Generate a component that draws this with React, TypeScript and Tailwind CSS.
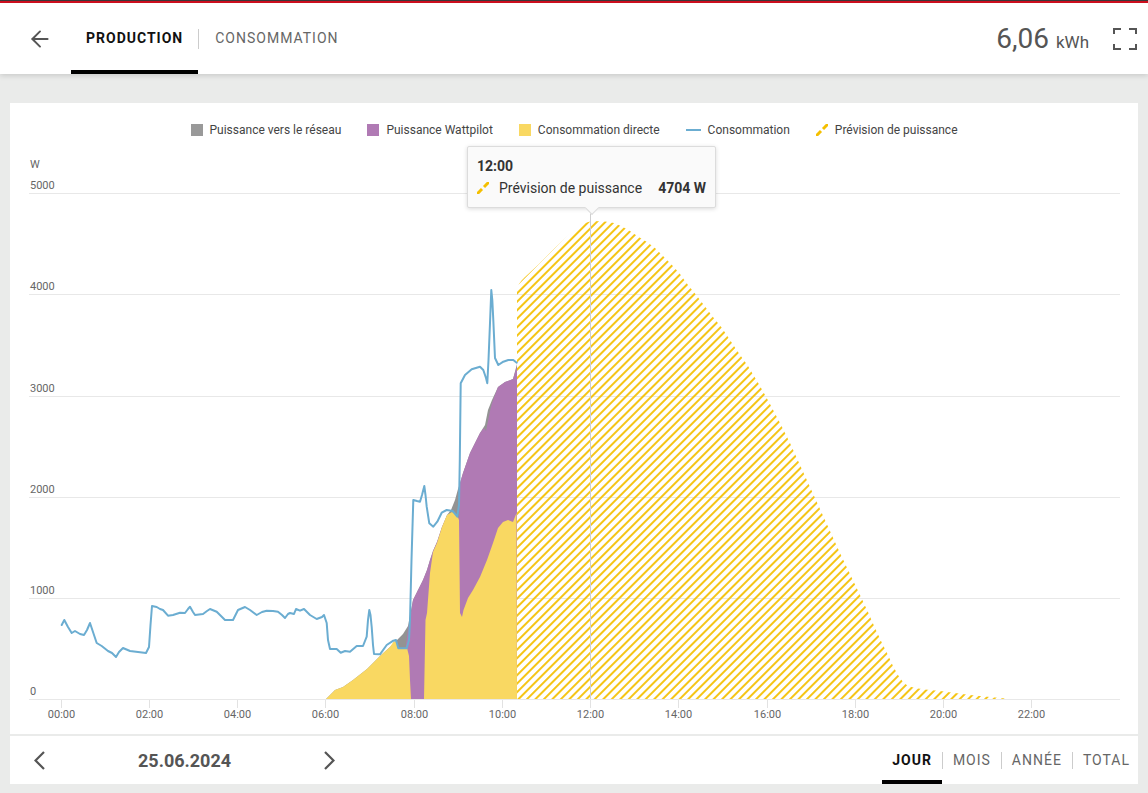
import { ArrowLeft } from 'lucide-react';

type Pt = [number, number];

const toPath = (pts: Pt[], close = false) =>
  pts.map((p, i) => `${i === 0 ? 'M' : 'L'}${p[0]} ${p[1]}`).join(' ') + (close ? ' Z' : '');

const BASE = 699;

const total: Pt[] = [
  [326, BASE], [335, 690], [343, 687], [353, 680], [367, 669], [380, 656], [390, 647], [397, 640],
  [403, 634], [408, 626], [413, 600], [418, 590], [423, 580], [427, 570], [430, 560], [433, 551],
  [437, 542], [442, 527], [447, 515], [451, 510], [455, 500], [458, 489], [460, 483], [463, 473],
  [470, 453], [480, 433], [485, 425], [488, 410], [492, 400], [498, 387], [505, 382], [513, 379],
  [517, 364], [517, BASE],
];

const wattpilot: Pt[] = [
  [405, BASE], [405, 652], [408, 630], [413, 600], [418, 590], [423, 580], [427, 570], [430, 560],
  [433, 551], [437, 542], [442, 527], [447, 516], [452, 513], [457, 515], [459, 518], [460, 483],
  [463, 473], [470, 453], [480, 433], [484, 428], [486, 431], [488, 421], [490, 411], [492, 403],
  [498, 387], [505, 382], [513, 379], [517, 366], [517, BASE],
];

const direct: Pt[] = [
  [326, BASE], [335, 690], [343, 687], [353, 680], [367, 669], [380, 656], [390, 647], [394, 641],
  [397, 643], [398.5, 648], [407, 648], [409, 656], [410, 680], [411, BASE], [424, BASE], [425.5, 620],
  [427, 613], [430, 573], [433, 552], [437, 543], [442, 527], [447, 515], [452, 512], [457, 515],
  [459, 520], [460, 613], [462, 617], [463.5, 610], [468, 598], [473, 590], [480, 577], [487, 560],
  [493, 543], [498, 528], [503, 522], [508, 520], [513, 522], [516.5, 513], [517, BASE],
];

const forecast: Pt[] = [
  [517, BASE], [517, 290], [519, 284], [522, 280], [525, 277], [538, 265], [555, 248], [572, 232],
  [585, 223], [592, 221], [605, 221.5], [614, 223], [622, 226.5], [630, 231], [638, 236.5],
  [647, 242], [655, 248], [663, 256], [672, 265], [680, 274], [688, 285], [697, 296], [705, 306.5],
  [713, 317], [722, 328], [730, 340], [738, 352], [748, 366], [760, 386], [770, 404], [780, 423],
  [790, 443], [800, 465], [810, 487], [820, 509], [830, 531], [840, 553], [850, 574], [860, 595],
  [868, 612], [875, 628], [882, 643], [888, 655], [893, 666], [898, 675], [903, 682], [908, 686],
  [915, 688], [925, 689.5], [940, 691], [955, 693], [970, 695], [985, 696.5], [1000, 698], [1010, BASE],
];

const consumption: Pt[] = [
  [61.7, 625], [64.3, 620], [68, 627], [71.7, 633], [75, 631], [80, 634], [84, 635], [87, 630],
  [90, 623], [93, 632], [96.7, 643], [101.7, 646], [108, 651], [112, 653], [116, 657], [119, 652],
  [123, 648], [130, 651], [138, 652], [146, 653], [149, 647], [150.5, 625], [152, 606], [156.7, 607],
  [160, 609], [163, 610], [168, 615.7], [173, 615], [180, 612.7], [185, 613], [188, 609], [190, 606.7],
  [193, 612], [195, 615], [203, 614], [207, 611], [210, 609], [216.7, 611.7], [222, 617], [225, 620],
  [233, 620], [236, 614], [238, 610], [245, 607], [250, 610], [256.7, 615], [262, 612], [266.7, 610.7],
  [273, 611], [278, 611.7], [282, 615], [285, 618], [288, 614], [290, 613], [294, 614], [296, 609],
  [300, 610.7], [304, 609], [307, 612], [310, 615], [316.7, 619], [322, 617], [324, 615], [326.7, 623],
  [328, 640], [330, 649], [336.7, 649], [340.7, 652.7], [345, 651], [350, 651.7], [356.7, 646],
  [363, 646], [366.7, 636.7], [368, 620], [369.3, 610], [370.5, 615], [371.7, 627], [373, 645],
  [374, 654], [380, 654.3], [386.7, 645], [393.3, 640.7], [396, 640], [398.3, 648.3], [406.7, 648.3],
  [409, 640], [410, 620], [411.5, 560], [413.3, 500], [417, 501], [420, 501.7], [422, 495],
  [424.3, 486], [425.5, 495], [426.7, 506.7], [429.3, 523.3], [433.3, 526.7], [437.3, 521.7],
  [441.7, 512.7], [446.7, 510], [452.7, 511], [457.3, 516.7], [459, 505], [459.8, 460], [460.7, 383.3],
  [465, 375], [471.7, 369.3], [480, 366.7], [483.3, 370], [486, 378], [487.3, 383.3], [488.5, 360],
  [490, 323], [491.3, 290], [492.3, 300], [493.3, 320], [495, 358], [498.3, 365], [503.3, 361.7],
  [508.3, 360], [513.3, 360], [516.7, 362.7],
];

const gridLines = [
  { v: '0', y: 699 },
  { v: '1000', y: 598 },
  { v: '2000', y: 497 },
  { v: '3000', y: 396 },
  { v: '4000', y: 294 },
  { v: '5000', y: 193 },
];

const hours = [0, 2, 4, 6, 8, 10, 12, 14, 16, 18, 20, 22];

function HatchIcon() {
  return (
    <svg width="12" height="12" viewBox="0 0 12 12">
      <line x1="0" y1="12" x2="5" y2="7" stroke="#f4bf00" strokeWidth="3" />
      <line x1="7" y1="5" x2="12" y2="0" stroke="#f4bf00" strokeWidth="3" />
    </svg>
  );
}

function Legend() {
  const items = [
    { label: 'Puissance vers le réseau', icon: <span className="w-[12px] h-[12px] bg-[#999999]" /> },
    { label: 'Puissance Wattpilot', icon: <span className="w-[12px] h-[12px] bg-[#b07ab4]" /> },
    { label: 'Consommation directe', icon: <span className="w-[12px] h-[12px] bg-[#f9d862]" /> },
    { label: 'Consommation', icon: <span className="w-[15px] h-[2px] bg-[#6badd1]" /> },
    { label: 'Prévision de puissance', icon: <HatchIcon /> },
  ];
  return (
    <div className="h-[52px] pt-[18px] flex justify-center gap-[26px] text-[12px] text-[#444]">
      {items.map((it) => (
        <div key={it.label} className="flex items-center gap-[7px] h-[18px]">
          {it.icon}
          <span>{it.label}</span>
        </div>
      ))}
    </div>
  );
}

function Chart() {
  return (
    <svg width="1128" height="579" viewBox="10 155 1128 579" className="block">
      <defs>
        <pattern id="hatch" patternUnits="userSpaceOnUse" width="6" height="6" patternTransform="rotate(45)">
          <line x1="3" y1="0" x2="3" y2="6" stroke="#f5c20a" strokeWidth="1.9" />
        </pattern>
      </defs>

      {gridLines.map((g) => (
        <g key={g.v}>
          <line x1="29" x2="1120" y1={g.y + 0.5} y2={g.y + 0.5} stroke="#e8e8e8" strokeWidth="1" />
          <text x="30" y={g.y - 4} fontSize="11" fill="#666">{g.v}</text>
        </g>
      ))}
      <text x="30" y="168" fontSize="11" fill="#666">W</text>

      {hours.map((h) => {
        const x = Math.round(60.5 + 44.13 * h) + 0.5;
        return (
          <g key={h}>
            <line x1={x} x2={x} y1="700" y2="708" stroke="#e2e2e2" strokeWidth="1" />
            <text x={x} y="718" fontSize="11" fill="#666" textAnchor="middle">
              {String(h).padStart(2, '0')}:00
            </text>
          </g>
        );
      })}

      <path d={toPath(forecast, true)} fill="url(#hatch)" />
      <path d={toPath(total, true)} fill="#939393" />
      <path d={toPath(wattpilot, true)} fill="#b07ab4" />
      <path d={toPath(direct, true)} fill="#f9d862" />
      <path d={toPath(consumption)} fill="none" stroke="#6badd1" strokeWidth="2" strokeLinejoin="round" strokeLinecap="round" />

      <line x1="590.5" x2="590.5" y1="213" y2="699" stroke="#cfcfcf" strokeWidth="1" />
    </svg>
  );
}

function Tooltip() {
  return (
    <div className="absolute left-[457px] top-[43px] w-[249px] h-[62px] bg-[#fafafa] border border-[#dcdcdc] rounded-[2px] shadow-[0_1px_4px_rgba(0,0,0,0.15)] px-[9px] pt-[9px] text-[14px] text-[#333]">
      <div className="font-bold leading-[20px]">12:00</div>
      <div className="mt-[2px] flex items-center h-[20px]">
        <HatchIcon />
        <span className="ml-[10px]">Prévision de puissance</span>
        <span className="ml-auto font-bold">4704 W</span>
      </div>
      <div className="absolute left-[119px] bottom-[-6px] w-[10px] h-[10px] rotate-45 bg-[#fafafa] border-r border-b border-[#dcdcdc]" />
    </div>
  );
}

function Chevron({ dir }: { dir: 'left' | 'right' }) {
  return (
    <svg width="11" height="19" viewBox="0 0 11 19">
      <polyline
        points={dir === 'left' ? '10,1 1.5,9.5 10,18' : '1,1 9.5,9.5 1,18'}
        fill="none"
        stroke="#555"
        strokeWidth="2.2"
      />
    </svg>
  );
}

export default function App() {
  const periods = ['JOUR', 'MOIS', 'ANNÉE', 'TOTAL'];
  return (
    <div className="w-full h-[793px] overflow-hidden bg-[#eaebea] font-['Roboto','Liberation_Sans',sans-serif]">
      <div className="h-[1px] bg-[#3a3a3a]" />
      <div className="h-[2px] bg-[#d0101f]" />

      <header className="h-[71px] bg-white flex items-stretch relative z-10 shadow-[0_2px_5px_rgba(0,0,0,0.13)]">
        <div className="w-[71px] pl-[9px] flex items-center justify-center">
          <ArrowLeft size={26} strokeWidth={1.8} color="#555" />
        </div>
        <div className="relative px-[15px] flex items-center text-[14px] font-bold tracking-[1px] text-[#111]">
          PRODUCTION
          <span className="absolute left-0 right-0 bottom-0 h-[4px] bg-black" />
        </div>
        <span className="w-px h-[20px] bg-[#cccccc] self-center" />
        <div className="px-[16px] flex items-center text-[14px] tracking-[1px] text-[#666]">CONSOMMATION</div>

        <div className="ml-auto flex items-center">
          <div className="flex items-baseline text-[#555]">
            <span className="text-[28px]">6,06</span>
            <span className="text-[17px] ml-[7px]">kWh</span>
          </div>
          <svg width="24" height="22" viewBox="0 0 24 22" className="ml-[24px] mr-[11px]">
            <path
              d="M1 6V1H8 M16 1H23V6 M23 16V21H16 M8 21H1V16"
              fill="none"
              stroke="#555"
              strokeWidth="2"
            />
          </svg>
        </div>
      </header>

      <div className="mx-[10px] mt-[29px] h-[631px] bg-white relative flex flex-col">
        <Legend />
        <Chart />
        <Tooltip />
      </div>

      <div className="mx-[10px] mt-[2px] h-[48px] bg-white flex items-center">
        <div className="pl-[24px] flex items-center gap-[93px]">
          <Chevron dir="left" />
          <span className="text-[18px] font-bold text-[#555]">25.06.2024</span>
          <Chevron dir="right" />
        </div>
        <div className="ml-auto self-stretch flex mr-[-2px]">
          {periods.map((p, i) => (
            <div key={p} className="flex">
              {i > 0 && <span className="w-px h-[17px] bg-[#cccccc] self-center" />}
              <div
                className={
                  i === 0
                    ? 'relative px-[10px] flex items-center text-[14px] tracking-[1px] font-bold text-[#111]'
                    : 'relative px-[10px] flex items-center text-[14px] tracking-[1px] text-[#666]'
                }
              >
                {p}
                {i === 0 && <span className="absolute left-0 right-0 bottom-0 h-[4px] bg-black" />}
              </div>
            </div>
          ))}
        </div>
      </div>
    </div>
  );
}
